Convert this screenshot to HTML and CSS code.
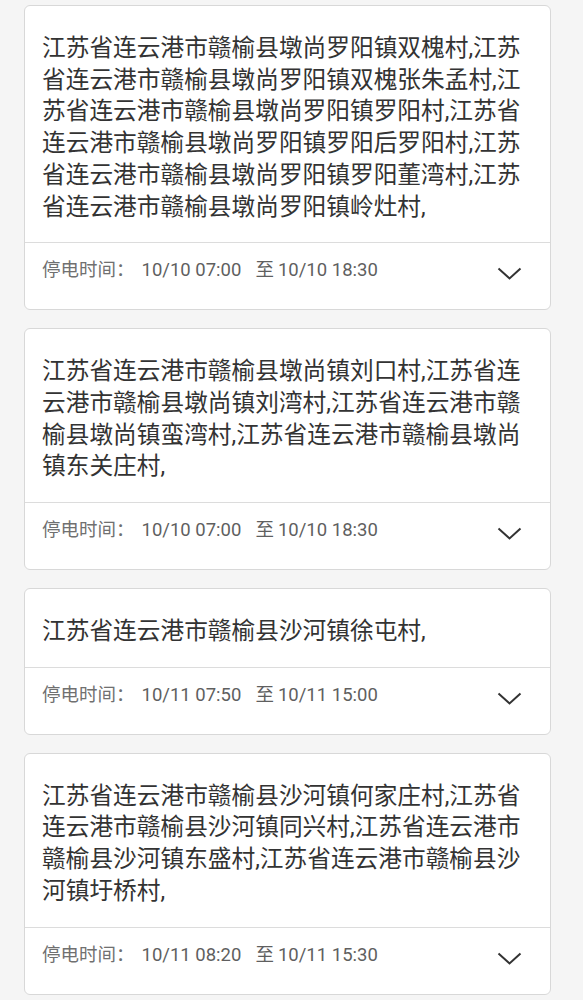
FILE: index.html
```html
<!DOCTYPE html>
<html>

<head>
    <meta name="viewport" content="width=device-width, initial-scale=1.0">
    <title>停电信息</title>
    <link rel="stylesheet" href="styles.css">
</head>

<body>
    <div id="list">
        <div class="card">
            <div class="card-body">江苏省连云港市赣榆县墩尚罗阳镇双槐村,江苏省连云港市赣榆县墩尚罗阳镇双槐张朱孟村,江苏省连云港市赣榆县墩尚罗阳镇罗阳村,江苏省连云港市赣榆县墩尚罗阳镇罗阳后罗阳村,江苏省连云港市赣榆县墩尚罗阳镇罗阳董湾村,江苏省连云港市赣榆县墩尚罗阳镇岭灶村,</div>
            <div class="card-foot">
                <span class="label">停电时间：</span>
                <span class="time">10/10 07:00</span>
                <span class="to">至</span>
                <span class="time">10/10 18:30</span>
                <svg class="arrow" width="25" height="13" viewBox="0 0 25 13">
                    <polyline points="1.5,1.5 12.5,11.5 23.5,1.5" />
                </svg>
            </div>
        </div>

        <div class="card">
            <div class="card-body">江苏省连云港市赣榆县墩尚镇刘口村,江苏省连云港市赣榆县墩尚镇刘湾村,江苏省连云港市赣榆县墩尚镇蛮湾村,江苏省连云港市赣榆县墩尚镇东关庄村,</div>
            <div class="card-foot">
                <span class="label">停电时间：</span>
                <span class="time">10/10 07:00</span>
                <span class="to">至</span>
                <span class="time">10/10 18:30</span>
                <svg class="arrow" width="25" height="13" viewBox="0 0 25 13">
                    <polyline points="1.5,1.5 12.5,11.5 23.5,1.5" />
                </svg>
            </div>
        </div>

        <div class="card">
            <div class="card-body">江苏省连云港市赣榆县沙河镇徐屯村,</div>
            <div class="card-foot">
                <span class="label">停电时间：</span>
                <span class="time">10/11 07:50</span>
                <span class="to">至</span>
                <span class="time">10/11 15:00</span>
                <svg class="arrow" width="25" height="13" viewBox="0 0 25 13">
                    <polyline points="1.5,1.5 12.5,11.5 23.5,1.5" />
                </svg>
            </div>
        </div>

        <div class="card">
            <div class="card-body">江苏省连云港市赣榆县沙河镇何家庄村,江苏省连云港市赣榆县沙河镇同兴村,江苏省连云港市赣榆县沙河镇东盛村,江苏省连云港市赣榆县沙河镇圩桥村,</div>
            <div class="card-foot">
                <span class="label">停电时间：</span>
                <span class="time">10/11 08:20</span>
                <span class="to">至</span>
                <span class="time">10/11 15:30</span>
                <svg class="arrow" width="25" height="13" viewBox="0 0 25 13">
                    <polyline points="1.5,1.5 12.5,11.5 23.5,1.5" />
                </svg>
            </div>
        </div>
    </div>
</body>

</html>
```

FILE: styles.css
```css
body {
    margin: 0;
    font-family: Roboto, "Noto Sans CJK SC", sans-serif;
    background: #f5f5f5;
    color: #333333;
}

/* 列表容器 */
#list {
    display: flex;
    flex-direction: column;
    gap: 18px;
    padding: 5px 32px 0 24px;
}

.card {
    background: #ffffff;
    border: 1px solid #d8d8d8;
    border-radius: 6px;
}

/* 停电地址 */
.card-body {
    padding: 27px 23px 19px 17px;
    font-size: 23.7px;
    line-height: 31.7px;
    color: #333333;
}

/* 停电时间 */
.card-foot {
    display: flex;
    align-items: flex-start;
    box-sizing: border-box;
    height: 67px;
    padding: 15px 28px 0 17px;
    border-top: 1px solid #dcdcdc;
    font-size: 18.5px;
    line-height: 24px;
    color: #5f5f5f;
}

.label {
    color: #707070;
}

.time {
    margin-left: 7px;
}

.to {
    margin-left: 14px;
}

.to + .time {
    margin-left: 4px;
}

.arrow {
    margin-left: auto;
    margin-top: 9px;
    fill: none;
    stroke: #333333;
    stroke-width: 2;
}
```
